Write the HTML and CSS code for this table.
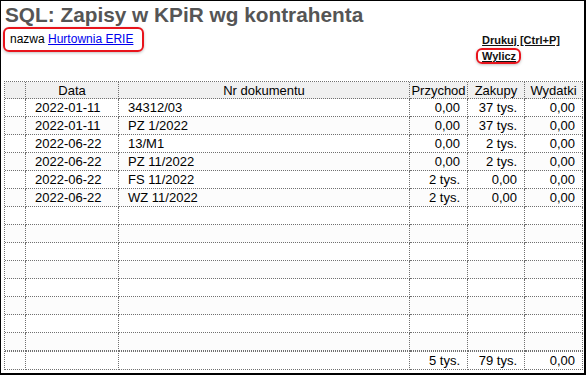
FILE: index.html
```html
<!DOCTYPE html>
<html>
<head>
<meta charset="utf-8">
<link rel="stylesheet" href="styles.css">
</head>
<body>
<div class="page">
  <h1 class="title">SQL: Zapisy w KPiR wg kontrahenta</h1>
  <div class="toolbar">
    <div class="filter">nazwa <a href="#" class="link">Hurtownia ERIE</a></div>
    <div class="actions">
      <a href="#" class="action">Drukuj [Ctrl+P]</a>
      <a href="#" class="action action-hl">Wylicz</a>
    </div>
  </div>
  <table class="grid">
    <thead>
      <tr>
        <th class="c-sel"></th>
        <th class="c-date">Data</th>
        <th class="c-doc">Nr dokumentu</th>
        <th class="c-num1">Przychod</th>
        <th class="c-num2">Zakupy</th>
        <th class="c-num3">Wydatki</th>
      </tr>
    </thead>
    <tbody>
      <tr><td></td><td class="t">2022-01-11</td><td class="t">34312/03</td><td class="n">0,00</td><td class="n">37 tys.</td><td class="n">0,00</td></tr>
      <tr><td></td><td class="t">2022-01-11</td><td class="t">PZ 1/2022</td><td class="n">0,00</td><td class="n">37 tys.</td><td class="n">0,00</td></tr>
      <tr><td></td><td class="t">2022-06-22</td><td class="t">13/M1</td><td class="n">0,00</td><td class="n">2 tys.</td><td class="n">0,00</td></tr>
      <tr><td></td><td class="t">2022-06-22</td><td class="t">PZ 11/2022</td><td class="n">0,00</td><td class="n">2 tys.</td><td class="n">0,00</td></tr>
      <tr><td></td><td class="t">2022-06-22</td><td class="t">FS 11/2022</td><td class="n">2 tys.</td><td class="n">0,00</td><td class="n">0,00</td></tr>
      <tr><td></td><td class="t">2022-06-22</td><td class="t">WZ 11/2022</td><td class="n">2 tys.</td><td class="n">0,00</td><td class="n">0,00</td></tr>
      <tr><td></td><td></td><td></td><td></td><td></td><td></td></tr>
      <tr><td></td><td></td><td></td><td></td><td></td><td></td></tr>
      <tr><td></td><td></td><td></td><td></td><td></td><td></td></tr>
      <tr><td></td><td></td><td></td><td></td><td></td><td></td></tr>
      <tr><td></td><td></td><td></td><td></td><td></td><td></td></tr>
      <tr><td></td><td></td><td></td><td></td><td></td><td></td></tr>
      <tr><td></td><td></td><td></td><td></td><td></td><td></td></tr>
      <tr><td></td><td></td><td></td><td></td><td></td><td></td></tr>
    </tbody>
    <tfoot>
      <tr><td></td><td></td><td></td><td class="n">5 tys.</td><td class="n">79 tys.</td><td class="n">0,00</td></tr>
    </tfoot>
  </table>
</div>
</body>
</html>
```
FILE: styles.css
```css
html, body {
  margin: 0;
  padding: 0;
  background: #fff;
}
.page {
  width: 586px;
  height: 375px;
  box-sizing: border-box;
  border-style: solid;
  border-color: #000;
  border-width: 1px 2px 2px 1px;
  font-family: "Liberation Sans", Arial, sans-serif;
  color: #000;
  overflow: hidden;
}
.title {
  margin: 0;
  padding: 2px 0 0 4px;
  font-size: 20.8px;
  line-height: 24px;
  font-weight: bold;
  color: #555;
}
.toolbar {
  display: flex;
  align-items: flex-start;
  justify-content: space-between;
  padding: 0 24px 0 2px;
}
.filter {
  border: 2px solid #e8141c;
  border-radius: 6px;
  box-shadow: 0 1px 3px rgba(0,0,0,0.25);
  padding: 3px 9px 4px 5px;
  font-size: 12px;
  line-height: 14px;
}
.link {
  color: #0000ee;
  text-decoration: underline;
}
.actions {
  display: flex;
  flex-direction: column;
  align-items: flex-start;
  padding-top: 7px;
}
.action {
  font-size: 11px;
  line-height: 13px;
  font-weight: bold;
  color: #111;
  text-decoration: underline;
}
.action-hl {
  margin: 1px 0 0 -6px;
  padding: 1px 3px 0 4px;
  border: 2px solid #e8141c;
  border-radius: 6px;
  box-shadow: 0 1px 3px rgba(0,0,0,0.25);
  line-height: 11px;
}
.grid {
  margin: 17px 0 0 3px;
  width: 579px;
  table-layout: fixed;
  border-collapse: separate;
  border-spacing: 0;
  border-left: 1px dotted #707070;
  border-top: 1px dotted #707070;
  font-size: 13px;
}
.grid th, .grid td {
  box-sizing: border-box;
  border-right: 1px dotted #707070;
  border-bottom: 1px dotted #707070;
  padding: 0;
  white-space: nowrap;
  overflow: hidden;
}
.grid th {
  height: 17px;
  background: #f0f0f0;
  font-weight: normal;
  text-align: center;
  line-height: 15px;
}
.c-sel { width: 21px; }
.c-date { width: 93px; }
.c-doc { width: 291px; }
.c-num1 { width: 58px; }
.c-num2 { width: 57px; }
.c-num3 { width: 58px; }
.grid td {
  height: 18px;
  line-height: 16px;
}
.grid tbody tr:nth-child(even) td {
  background: #fcfcfc;
}
.grid tfoot td {
  height: 19px;
  border-top: 1px dotted #707070;
}
.grid td.t {
  text-align: left;
  padding-left: 9px;
}
.grid td.n {
  text-align: right;
  padding-right: 7px;
}
```
